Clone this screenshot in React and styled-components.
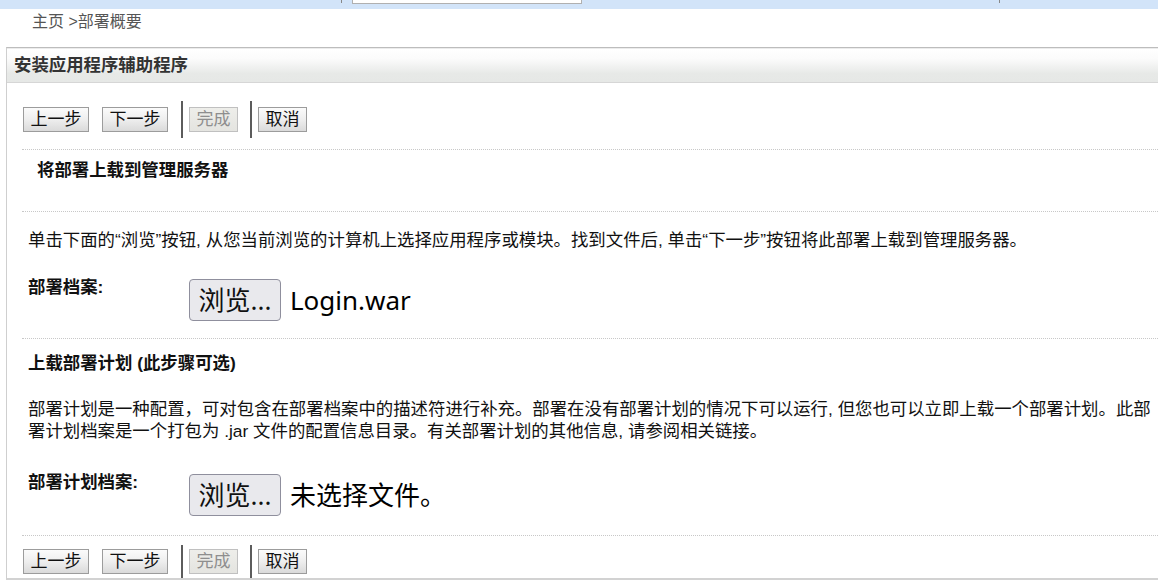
import React from "react";
import styled, { createGlobalStyle } from "styled-components";

const GlobalStyle = createGlobalStyle`
  html, body {
    margin: 0;
    padding: 0;
    background: #fff;
    overflow: hidden;
  }
  body {
    font-family: "Liberation Sans", "Noto Sans CJK SC", sans-serif;
    color: #111;
  }
`;

export default function App() {
  return (
    <Page>
      <GlobalStyle />
      <TopBar>
        <Tick style={{ marginLeft: 341 }} />
        <SearchStub />
        <Tick style={{ marginLeft: 417 }} />
      </TopBar>
      <Breadcrumb>主页 &gt;部署概要</Breadcrumb>
      <Panel>
        <PanelHeader>安装应用程序辅助程序</PanelHeader>
        <PanelBody>
          <ButtonBar top={18} height={37} />
          <Divider $top={11} />
          <Heading $indent={15} $top={9} $bottom={30}>将部署上载到管理服务器</Heading>
          <Divider />
          <Text $top={17}>
            单击下面的“浏览”按钮, 从您当前浏览的计算机上选择应用程序或模块。找到文件后, 单击“下一步”按钮将此部署上载到管理服务器。
          </Text>
          <FieldRow $top={25}>
            <Label>部署档案:</Label>
            <FileButton>浏览...</FileButton>
            <FileName>Login.war</FileName>
          </FieldRow>
          <Divider $top={17} />
          <Heading $indent={6} $top={13} $bottom={0}>上载部署计划 (此步骤可选)</Heading>
          <Text $top={24}>
            部署计划是一种配置，可对包含在部署档案中的描述符进行补充。部署在没有部署计划的情况下可以运行, 但您也可以立即上载一个部署计划。此部署计划档案是一个打包为 .jar 文件的配置信息目录。有关部署计划的其他信息, 请参阅相关链接。
          </Text>
          <FieldRow $top={29}>
            <Label>部署计划档案:</Label>
            <FileButton>浏览...</FileButton>
            <FileName>未选择文件。</FileName>
          </FieldRow>
          <Divider $top={19} />
          <ButtonBar top={9} height={33} />
        </PanelBody>
      </Panel>
    </Page>
  );
}

function ButtonBar({ top, height }) {
  return (
    <Bar $top={top} $height={height}>
      <Btn $wide>上一步</Btn>
      <Btn $wide>下一步</Btn>
      <Sep />
      <Btn disabled>完成</Btn>
      <Sep />
      <Btn>取消</Btn>
    </Bar>
  );
}

const Page = styled.div`
  width: 1158px;
  height: 581px;
  overflow: hidden;
`;

const TopBar = styled.div`
  height: 9px;
  background: #d2e4f9;
  display: flex;
  align-items: flex-start;
`;

const Tick = styled.div`
  width: 1px;
  height: 3px;
  background: #888;
`;

const SearchStub = styled.div`
  margin-left: 10px;
  width: 228px;
  height: 3px;
  background: #fff;
  border: 1px solid #b0b0b0;
  border-top: none;
`;

const Breadcrumb = styled.div`
  height: 38px;
  padding-left: 32px;
  font-size: 16px;
  line-height: 25px;
  color: #555;
`;

const Panel = styled.div`
  margin-left: 6px;
  border-left: 1px solid #cfcfcf;
  border-top: 1px solid #bdbdbd;
  border-bottom: 2px solid #d2d2d2;
`;

const PanelHeader = styled.div`
  height: 35px;
  box-sizing: border-box;
  padding-left: 7px;
  border-top: 1px solid #ececec;
  border-bottom: 1px solid #d6d6d6;
  background: linear-gradient(to bottom, #ffffff 0%, #fbfbfb 30%, #e7e9e7 75%, #e6e8e6 100%);
  font-size: 17.4px;
  font-weight: bold;
  line-height: 32px;
  color: #333;
`;

const PanelBody = styled.div`
  padding-left: 15px;
`;

const Bar = styled.div`
  margin-top: ${(p) => p.$top}px;
  height: ${(p) => p.$height}px;
  display: flex;
  align-items: center;
  padding-left: 1px;
`;

const Btn = styled.button`
  width: ${(p) => (p.$wide ? 66 : 49)}px;
  height: 25px;
  box-sizing: border-box;
  padding: 0;
  margin-right: 13px;
  font-family: "Liberation Sans", "Noto Sans CJK SC", sans-serif;
  font-size: 17px;
  line-height: 23px;
  color: #111;
  border: 1px solid #9c9c9c;
  border-radius: 0;
  background: linear-gradient(to bottom, #fbfbfb 0%, #eeeeee 50%, #dadada 100%);
  &:disabled {
    margin-right: 12px;
    color: #8e8e8e;
    border-color: #c0c0c0;
    background: linear-gradient(to bottom, #eeeeea 0%, #e4e4e0 100%);
  }
`;

const Sep = styled.div`
  width: 2px;
  align-self: stretch;
  background: #5c5c5c;
  margin-right: 6px;
`;

const Divider = styled.div`
  margin-top: ${(p) => p.$top || 0}px;
  border-top: 1px dotted #c8c8c8;
`;

const Heading = styled.div`
  padding: ${(p) => p.$top}px 0 ${(p) => p.$bottom}px ${(p) => p.$indent}px;
  font-size: 17.4px;
  font-weight: bold;
  line-height: 22px;
  color: #111;
`;

const Text = styled.p`
  margin: ${(p) => p.$top}px 0 0;
  padding-left: 6px;
  font-size: 17.4px;
  line-height: 22px;
  color: #111;
`;

const FieldRow = styled.div`
  margin-top: ${(p) => p.$top}px;
  padding-left: 6px;
  display: flex;
  align-items: flex-start;
`;

const Label = styled.div`
  width: 161px;
  font-size: 17.4px;
  font-weight: bold;
  line-height: 22px;
  color: #111;
`;

const FileButton = styled.button`
  margin-top: 3px;
  width: 92px;
  height: 42px;
  box-sizing: border-box;
  padding: 0;
  font-family: "Noto Sans", "Noto Sans CJK SC", sans-serif;
  font-size: 26px;
  line-height: 40px;
  color: #111;
  background: #e9e9ed;
  border: 1px solid #8f8f9d;
  border-radius: 4px;
`;

const FileName = styled.span`
  margin: 3px 0 0 9px;
  font-family: "Noto Sans", "Noto Sans CJK SC", sans-serif;
  font-size: 26px;
  line-height: 42px;
  color: #000;
`;
